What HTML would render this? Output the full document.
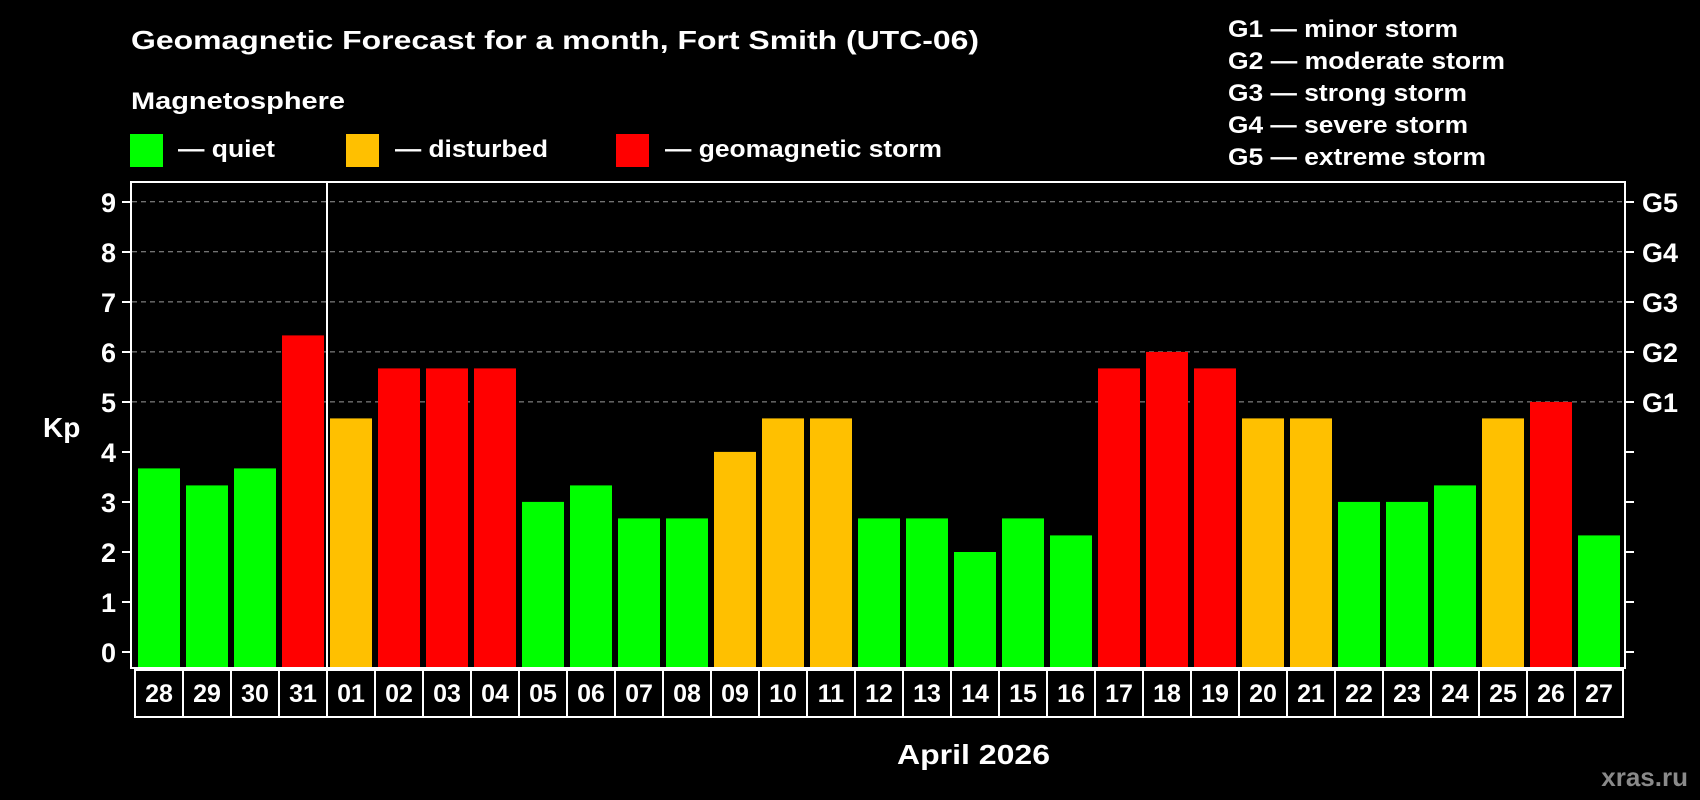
<!DOCTYPE html>
<html><head><meta charset="utf-8"><style>
html,body{margin:0;padding:0;background:#000;width:1700px;height:800px;overflow:hidden}
text{font-family:"Liberation Sans",Arial,sans-serif;font-weight:bold;fill:#fff}
</style></head><body>
<svg width="1700" height="800" xmlns="http://www.w3.org/2000/svg">
<text x="131" y="49" font-size="26" textLength="848" lengthAdjust="spacingAndGlyphs">Geomagnetic Forecast for a month, Fort Smith (UTC-06)</text>
<text x="131" y="109" font-size="24" textLength="214" lengthAdjust="spacingAndGlyphs">Magnetosphere</text>
<rect x="130" y="134" width="33" height="33" fill="#00ff00"/>
<text x="178" y="157" font-size="24" textLength="97" lengthAdjust="spacingAndGlyphs">— quiet</text>
<rect x="346" y="134" width="33" height="33" fill="#ffc000"/>
<text x="395" y="157" font-size="24" textLength="153" lengthAdjust="spacingAndGlyphs">— disturbed</text>
<rect x="616" y="134" width="33" height="33" fill="#ff0000"/>
<text x="665" y="157" font-size="24" textLength="277" lengthAdjust="spacingAndGlyphs">— geomagnetic storm</text>
<g font-size="24">
<text x="1228" y="37" textLength="230" lengthAdjust="spacingAndGlyphs">G1 — minor storm</text>
<text x="1228" y="69" textLength="277" lengthAdjust="spacingAndGlyphs">G2 — moderate storm</text>
<text x="1228" y="101" textLength="239" lengthAdjust="spacingAndGlyphs">G3 — strong storm</text>
<text x="1228" y="133" textLength="240" lengthAdjust="spacingAndGlyphs">G4 — severe storm</text>
<text x="1228" y="165" textLength="258" lengthAdjust="spacingAndGlyphs">G5 — extreme storm</text>
</g>
<g stroke="#999" stroke-width="1" stroke-dasharray="5,4">
<line x1="132" x2="1624" y1="201.8" y2="201.8"/>
<line x1="132" x2="1624" y1="251.8" y2="251.8"/>
<line x1="132" x2="1624" y1="301.9" y2="301.9"/>
<line x1="132" x2="1624" y1="351.9" y2="351.9"/>
<line x1="132" x2="1624" y1="401.9" y2="401.9"/>
</g>
<g>
<rect x="138" y="468.4" width="42" height="199.6" fill="#00ff00"/>
<rect x="186" y="485.4" width="42" height="182.6" fill="#00ff00"/>
<rect x="234" y="468.4" width="42" height="199.6" fill="#00ff00"/>
<rect x="282" y="335.4" width="42" height="332.6" fill="#ff0000"/>
<rect x="330" y="418.4" width="42" height="249.6" fill="#ffc000"/>
<rect x="378" y="368.4" width="42" height="299.6" fill="#ff0000"/>
<rect x="426" y="368.4" width="42" height="299.6" fill="#ff0000"/>
<rect x="474" y="368.4" width="42" height="299.6" fill="#ff0000"/>
<rect x="522" y="501.9" width="42" height="166.1" fill="#00ff00"/>
<rect x="570" y="485.4" width="42" height="182.6" fill="#00ff00"/>
<rect x="618" y="518.4" width="42" height="149.6" fill="#00ff00"/>
<rect x="666" y="518.4" width="42" height="149.6" fill="#00ff00"/>
<rect x="714" y="451.9" width="42" height="216.1" fill="#ffc000"/>
<rect x="762" y="418.4" width="42" height="249.6" fill="#ffc000"/>
<rect x="810" y="418.4" width="42" height="249.6" fill="#ffc000"/>
<rect x="858" y="518.4" width="42" height="149.6" fill="#00ff00"/>
<rect x="906" y="518.4" width="42" height="149.6" fill="#00ff00"/>
<rect x="954" y="552" width="42" height="116" fill="#00ff00"/>
<rect x="1002" y="518.4" width="42" height="149.6" fill="#00ff00"/>
<rect x="1050" y="535.4" width="42" height="132.6" fill="#00ff00"/>
<rect x="1098" y="368.4" width="42" height="299.6" fill="#ff0000"/>
<rect x="1146" y="351.9" width="42" height="316.1" fill="#ff0000"/>
<rect x="1194" y="368.4" width="42" height="299.6" fill="#ff0000"/>
<rect x="1242" y="418.4" width="42" height="249.6" fill="#ffc000"/>
<rect x="1290" y="418.4" width="42" height="249.6" fill="#ffc000"/>
<rect x="1338" y="501.9" width="42" height="166.1" fill="#00ff00"/>
<rect x="1386" y="501.9" width="42" height="166.1" fill="#00ff00"/>
<rect x="1434" y="485.4" width="42" height="182.6" fill="#00ff00"/>
<rect x="1482" y="418.4" width="42" height="249.6" fill="#ffc000"/>
<rect x="1530" y="401.9" width="42" height="266.1" fill="#ff0000"/>
<rect x="1578" y="535.4" width="42" height="132.6" fill="#00ff00"/>
</g>
<rect x="131" y="182" width="1494" height="486" fill="none" stroke="#fff" stroke-width="2"/>
<line x1="327" y1="182" x2="327" y2="668" stroke="#fff" stroke-width="2"/>
<g stroke="#fff" stroke-width="2">
<path d="M122 652H131M122 602H131M122 552H131M122 502H131M122 452H131M122 402H131M122 352H131M122 302H131M122 252H131M122 202H131"/>
<path d="M1625 652H1634M1625 602H1634M1625 552H1634M1625 502H1634M1625 452H1634M1625 402H1634M1625 352H1634M1625 302H1634M1625 252H1634M1625 202H1634"/>
</g>
<g font-size="27" text-anchor="end">
<text x="116" y="662">0</text><text x="116" y="612">1</text><text x="116" y="562">2</text>
<text x="116" y="512">3</text><text x="116" y="462">4</text><text x="116" y="412">5</text>
<text x="116" y="362">6</text><text x="116" y="312">7</text><text x="116" y="262">8</text>
<text x="116" y="212">9</text>
</g>
<g font-size="27">
<text x="1642" y="412">G1</text><text x="1642" y="362">G2</text><text x="1642" y="312">G3</text>
<text x="1642" y="262">G4</text><text x="1642" y="212">G5</text>
</g>
<text x="43" y="437" font-size="28">Kp</text>
<g fill="none" stroke="#fff" stroke-width="2">
<rect x="135" y="670" width="1488" height="47"/>
<path d="M183 670V717M231 670V717M279 670V717M327 670V717M375 670V717M423 670V717M471 670V717M519 670V717M567 670V717M615 670V717M663 670V717M711 670V717M759 670V717M807 670V717M855 670V717M903 670V717M951 670V717M999 670V717M1047 670V717M1095 670V717M1143 670V717M1191 670V717M1239 670V717M1287 670V717M1335 670V717M1383 670V717M1431 670V717M1479 670V717M1527 670V717M1575 670V717"/>
</g>
<g font-size="25" text-anchor="middle">
<text x="159" y="702">28</text><text x="207" y="702">29</text><text x="255" y="702">30</text><text x="303" y="702">31</text>
<text x="351" y="702">01</text><text x="399" y="702">02</text><text x="447" y="702">03</text><text x="495" y="702">04</text>
<text x="543" y="702">05</text><text x="591" y="702">06</text><text x="639" y="702">07</text><text x="687" y="702">08</text>
<text x="735" y="702">09</text><text x="783" y="702">10</text><text x="831" y="702">11</text><text x="879" y="702">12</text>
<text x="927" y="702">13</text><text x="975" y="702">14</text><text x="1023" y="702">15</text><text x="1071" y="702">16</text>
<text x="1119" y="702">17</text><text x="1167" y="702">18</text><text x="1215" y="702">19</text><text x="1263" y="702">20</text>
<text x="1311" y="702">21</text><text x="1359" y="702">22</text><text x="1407" y="702">23</text><text x="1455" y="702">24</text>
<text x="1503" y="702">25</text><text x="1551" y="702">26</text><text x="1599" y="702">27</text>
</g>
<text x="897" y="764" font-size="28" textLength="153" lengthAdjust="spacingAndGlyphs">April 2026</text>
<text x="1688" y="786" font-size="26" text-anchor="end" style="fill:#8a8a8a">xras.ru</text>
</svg>
</body></html>
